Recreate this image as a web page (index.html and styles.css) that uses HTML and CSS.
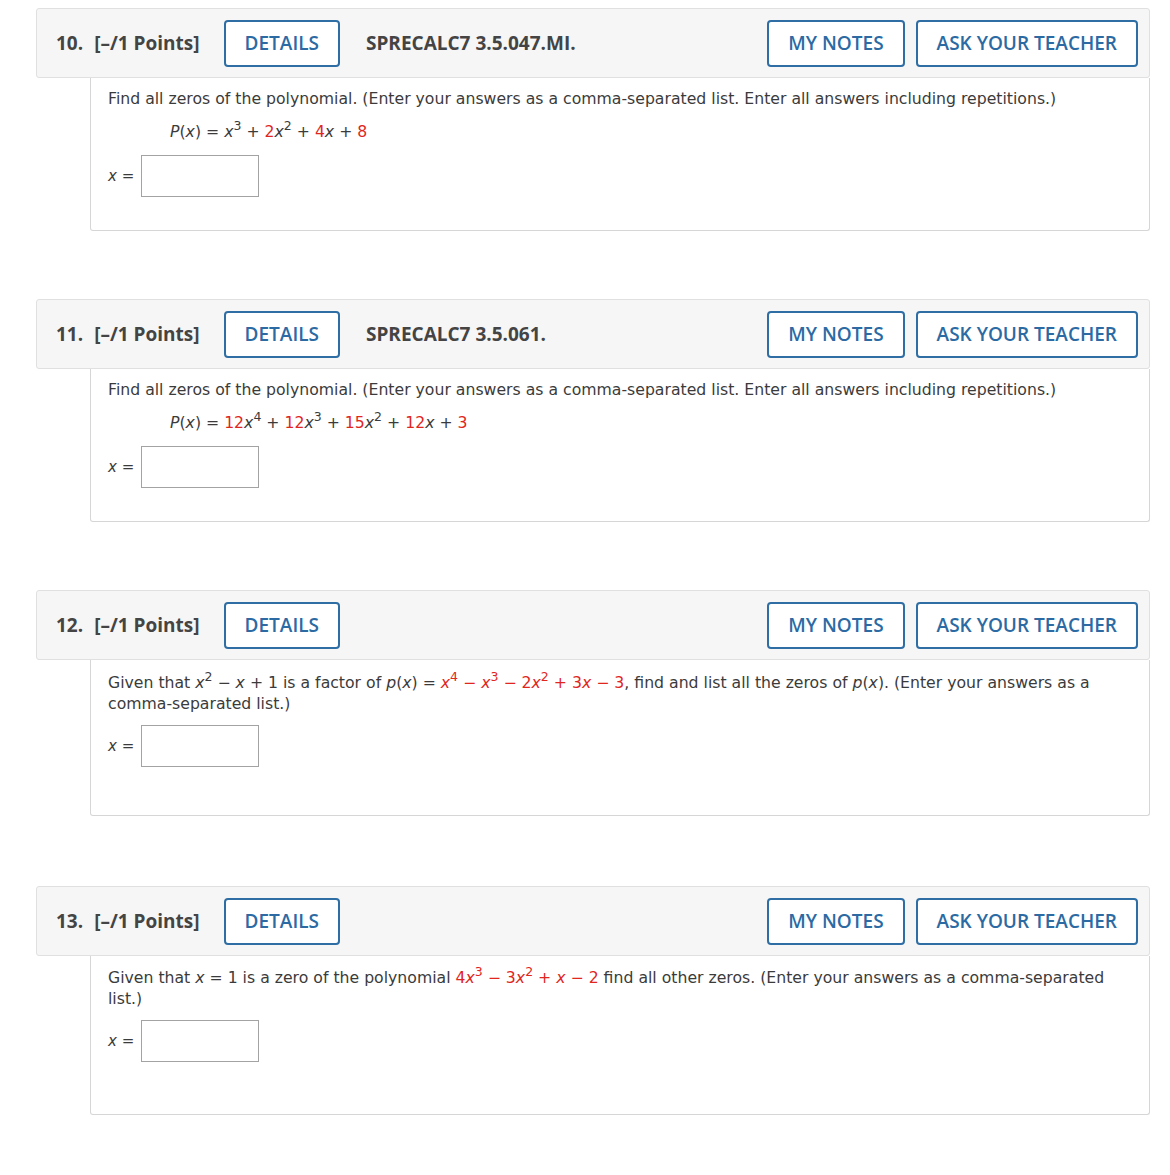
FILE: index.html
```html
<!DOCTYPE html>
<html lang="en">
<head>
    <meta charset="UTF-8">
    <title>Assignment</title>
    <link rel="stylesheet" href="styles.css">
</head>
<body>
    <div class="questions">

        <!-- Question 10 -->
        <div class="question">
            <div class="q-header">
                <span class="q-num">10.</span>
                <span class="q-points">[&ndash;/1 Points]</span>
                <button class="btn">DETAILS</button>
                <span class="q-code">SPRECALC7 3.5.047.MI.</span>
                <div class="q-actions">
                    <button class="btn">MY NOTES</button>
                    <button class="btn">ASK YOUR TEACHER</button>
                </div>
            </div>
            <div class="q-body">
                <p>Find all zeros of the polynomial. (Enter your answers as a comma-separated list. Enter all answers including repetitions.)</p>
                <p class="formula"><i>P</i>(<i>x</i>) = <i>x</i><sup>3</sup> + <span class="red">2</span><i>x</i><sup>2</sup> + <span class="red">4</span><i>x</i> + <span class="red">8</span></p>
                <div class="answer">
                    <label><i>x</i> =</label>
                    <input type="text">
                </div>
            </div>
        </div>

        <!-- Question 11 -->
        <div class="question">
            <div class="q-header">
                <span class="q-num">11.</span>
                <span class="q-points">[&ndash;/1 Points]</span>
                <button class="btn">DETAILS</button>
                <span class="q-code">SPRECALC7 3.5.061.</span>
                <div class="q-actions">
                    <button class="btn">MY NOTES</button>
                    <button class="btn">ASK YOUR TEACHER</button>
                </div>
            </div>
            <div class="q-body">
                <p>Find all zeros of the polynomial. (Enter your answers as a comma-separated list. Enter all answers including repetitions.)</p>
                <p class="formula"><i>P</i>(<i>x</i>) = <span class="red">12</span><i>x</i><sup>4</sup> + <span class="red">12</span><i>x</i><sup>3</sup> + <span class="red">15</span><i>x</i><sup>2</sup> + <span class="red">12</span><i>x</i> + <span class="red">3</span></p>
                <div class="answer">
                    <label><i>x</i> =</label>
                    <input type="text">
                </div>
            </div>
        </div>

        <!-- Question 12 -->
        <div class="question spaced">
            <div class="q-header">
                <span class="q-num">12.</span>
                <span class="q-points">[&ndash;/1 Points]</span>
                <button class="btn">DETAILS</button>
                <div class="q-actions">
                    <button class="btn">MY NOTES</button>
                    <button class="btn">ASK YOUR TEACHER</button>
                </div>
            </div>
            <div class="q-body tall">
                <p>Given that <i>x</i><sup>2</sup> &minus; <i>x</i> + 1 is a factor of <i>p</i>(<i>x</i>) = <span class="red"><i>x</i><sup>4</sup> &minus; <i>x</i><sup>3</sup> &minus; 2<i>x</i><sup>2</sup> + 3<i>x</i> &minus; 3</span>, find and list all the zeros of <i>p</i>(<i>x</i>). (Enter your answers as a comma-separated list.)</p>
                <div class="answer">
                    <label><i>x</i> =</label>
                    <input type="text">
                </div>
            </div>
        </div>

        <!-- Question 13 -->
        <div class="question">
            <div class="q-header">
                <span class="q-num">13.</span>
                <span class="q-points">[&ndash;/1 Points]</span>
                <button class="btn">DETAILS</button>
                <div class="q-actions">
                    <button class="btn">MY NOTES</button>
                    <button class="btn">ASK YOUR TEACHER</button>
                </div>
            </div>
            <div class="q-body tall taller">
                <p>Given that <i>x</i> = 1 is a zero of the polynomial <span class="red">4<i>x</i><sup>3</sup> &minus; 3<i>x</i><sup>2</sup> + <i>x</i> &minus; 2</span> find all other zeros. (Enter your answers as a comma-separated list.)</p>
                <div class="answer">
                    <label><i>x</i> =</label>
                    <input type="text">
                </div>
            </div>
        </div>

    </div>
</body>
</html>
```

FILE: styles.css
```css
/* Page */
body {
    margin: 0;
    padding: 0;
    background: #fff;
    font-family: 'DejaVu Sans', sans-serif;
    color: #3b3b3b;
}

.questions {
    padding: 8px 20px 0 36px;
}

.question {
    margin-bottom: 68px;
}

.question.spaced {
    margin-bottom: 70px;
}

/* Header bar with buttons */
.q-header {
    display: flex;
    align-items: center;
    height: 68px;
    padding: 0 11px 0 19px;
    background-color: #f6f6f6;
    border: 1px solid #e0e0e0;
    border-radius: 3px;
    font-family: 'Open Sans', sans-serif;
    color: #444;
}

.q-num {
    font-size: 19px;
    font-weight: 700;
    margin-right: 11px;
}

.q-points {
    font-size: 19px;
    font-weight: 700;
    margin-right: 24px;
}

.q-code {
    font-size: 19px;
    font-weight: 700;
    margin-left: 26px;
}

.q-actions {
    margin-left: auto;
    display: flex;
    gap: 11px;
}

.btn {
    height: 47px;
    padding: 0 19px;
    background: #fff;
    border: 2px solid #2f6ea4;
    border-radius: 4px;
    font-family: 'Open Sans', sans-serif;
    font-size: 19px;
    font-weight: 600;
    color: #2b6aa3;
    cursor: pointer;
}

/* Question body */
.q-body {
    margin-left: 54px;
    padding: 10px 18px 33px 17px;
    border: 1px solid #d6d6d6;
    border-top: none;
    border-radius: 0 0 3px 3px;
    font-size: 15.7px;
    line-height: 21px;
}

.q-body.tall {
    padding-top: 12px;
    padding-bottom: 48px;
}

.q-body.taller {
    padding-top: 11px;
    padding-bottom: 52px;
}

.q-body p {
    margin: 0 0 12px 0;
}

.q-body.tall p {
    margin-bottom: 11px;
}

.q-body .formula {
    padding-left: 62px;
    margin-bottom: 13px;
}

.q-body sup {
    font-size: 12.5px;
    line-height: 0;
    vertical-align: 7px;
}

.red {
    color: #e0261d;
}

/* Answer row */
.answer {
    display: flex;
    align-items: center;
    gap: 7px;
}

.answer label {
    font-size: 15px;
}

.answer input {
    width: 118px;
    height: 42px;
    box-sizing: border-box;
    border: 1px solid #a3a3a3;
    margin: 0;
    padding: 0;
}
```
